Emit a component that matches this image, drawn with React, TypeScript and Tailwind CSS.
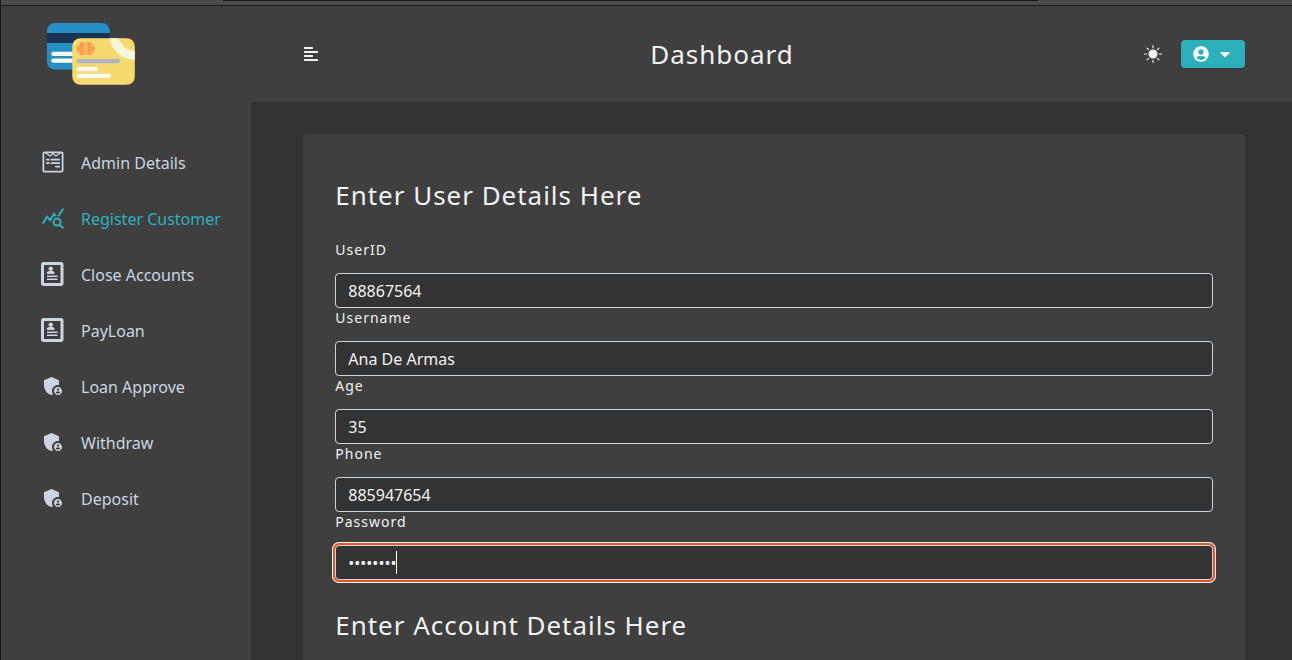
import type { ReactNode } from "react";
import { FaAlignLeft, FaCaretDown, FaUserCircle, FaWpforms } from "react-icons/fa";
import { ImProfile } from "react-icons/im";
import { MdAdminPanelSettings, MdQueryStats } from "react-icons/md";
import { BsFillSunFill } from "react-icons/bs";

const links: { label: string; icon: ReactNode; active?: boolean }[] = [
  { label: "Admin Details", icon: <FaWpforms /> },
  { label: "Register Customer", icon: <MdQueryStats />, active: true },
  { label: "Close Accounts", icon: <ImProfile /> },
  { label: "PayLoan", icon: <ImProfile /> },
  { label: "Loan Approve", icon: <MdAdminPanelSettings /> },
  { label: "Withdraw", icon: <MdAdminPanelSettings /> },
  { label: "Deposit", icon: <MdAdminPanelSettings /> },
];

const fields = [
  { label: "UserID", value: "88867564" },
  { label: "Username", value: "Ana De Armas" },
  { label: "Age", value: "35" },
  { label: "Phone", value: "885947654" },
];

function Logo() {
  return (
    <svg width="88" height="62" viewBox="0 0 88 62">
      <defs>
        <clipPath id="back-card">
          <rect width="62.7" height="46.5" rx="8" />
        </clipPath>
        <clipPath id="front-card">
          <rect x="25.3" y="15.2" width="62.5" height="46.6" rx="8" />
        </clipPath>
      </defs>
      <g clipPath="url(#back-card)">
        <rect width="63" height="47" fill="#268fc4" />
        <rect y="10" width="63" height="10" fill="#193452" />
        <rect x="4.3" y="28.7" width="30" height="4.3" rx="2.1" fill="#fcfbf0" />
        <rect x="4.3" y="35.5" width="30" height="4.3" rx="2.1" fill="#fcfbf0" />
      </g>
      <g clipPath="url(#front-card)">
        <rect x="25" y="15" width="63" height="47" fill="#f5da70" />
        <circle cx="87.7" cy="11.3" r="21" fill="none" stroke="#f6f8dc" strokeWidth="9" />
        <rect x="29.6" y="19.3" width="18.3" height="12.8" rx="5.5" fill="#f3b962" />
        <path d="M33 19.3h3.8v12.8H33zM40.6 19.3h3.6v12.8h-3.6zM29.6 23.8h7.2v4.2h-7.2zM40.6 23.8h7.3v4.2h-7.3z" fill="#fa9e4c" />
        <rect x="29.6" y="36" width="43.5" height="4.3" rx="2.1" fill="#afb5c2" />
        <rect x="29.6" y="44" width="21.3" height="4.3" rx="2.1" fill="#fcfbf0" />
        <rect x="29.6" y="50.8" width="34.4" height="4.3" rx="2.1" fill="#fcfbf0" />
      </g>
    </svg>
  );
}

function Sidebar() {
  return (
    <aside className="w-[250px] shrink-0 bg-[#3f3f3f]">
      <header className="flex h-24 items-center pl-[46px]">
        <Logo />
      </header>
      <nav className="mt-[33px] flex flex-col">
        {links.map(({ label, icon, active }) => (
          <a
            key={label}
            className={
              "flex h-14 items-center pl-10 text-base " +
              (active ? "text-[#2cb1bc]" : "text-[#cbd5e1]")
            }
          >
            <span className="mr-4 mb-0.5 grid w-6 place-items-center text-2xl">{icon}</span>
            {label}
          </a>
        ))}
      </nav>
    </aside>
  );
}

function Navbar() {
  return (
    <nav className="flex h-24 shrink-0 items-center justify-between bg-[#3f3f3f] pr-[47px] pl-[52px] shadow-[0_1px_0_0_rgba(0,0,0,0.1)]">
      <button className="w-[14px] text-base text-[#f1f1f1]">
        <FaAlignLeft />
      </button>
      <h1 className="pr-[17px] text-[26px] leading-none tracking-[1px]">Dashboard</h1>
      <div className="flex items-center">
        <BsFillSunFill className="mr-[19px] text-lg text-[#f1f1f1]" />
        <button className="flex h-7 w-16 items-center justify-center gap-2 rounded bg-[#2cb1bc] text-base text-white shadow-sm">
          <FaUserCircle />
          <FaCaretDown />
        </button>
      </div>
    </nav>
  );
}

export default function App() {
  return (
    <div className="flex h-[660px] flex-col overflow-hidden border-l border-[#1f151c] bg-[#333] font-['Noto_Sans',sans-serif] text-[#f1f1f1]">
      <div className="h-1.5 shrink-0 border-b border-[#191919] bg-[#4a4a4a] pr-[254px] pl-[222px]">
        <div className="h-px bg-[#191919]" />
      </div>
      <div className="flex min-h-0 grow">
        <Sidebar />
        <div className="flex min-w-0 grow flex-col">
          <Navbar />
          <main className="mt-8 mr-[46.8px] ml-[52.3px] h-[700px] shrink-0 rounded bg-[#3f3f3f] px-8 pt-[41px]">
            <h2 className="mb-[25px] text-[25.95px] leading-10 tracking-[1px]">Enter User Details Here</h2>
            {fields.map(({ label, value }) => (
              <div key={label} className="flex h-[68px] flex-col">
                <label className="h-[33px] text-sm leading-5 tracking-[1px]">{label}</label>
                <input
                  className="h-[35px] w-full rounded border border-[#cbd5e1] bg-[#333] px-3 text-base outline-none"
                  defaultValue={value}
                />
              </div>
            ))}
            <div className="flex h-[68px] flex-col">
              <label className="h-[33px] text-sm leading-5 tracking-[1px]">Password</label>
              <div className="flex h-[35px] shrink-0 items-center rounded border border-[#cbd5e1] bg-[#333] px-3 shadow-[0_0_0_2px_#e95420,0_0_0_3px_#fff]">
                <span className="text-base">••••••••</span>
                <span className="h-[23px] w-px bg-white" />
              </div>
            </div>
            <h2 className="mt-[25px] text-[25.95px] leading-10 tracking-[1px]">Enter Account Details Here</h2>
          </main>
        </div>
      </div>
    </div>
  );
}
